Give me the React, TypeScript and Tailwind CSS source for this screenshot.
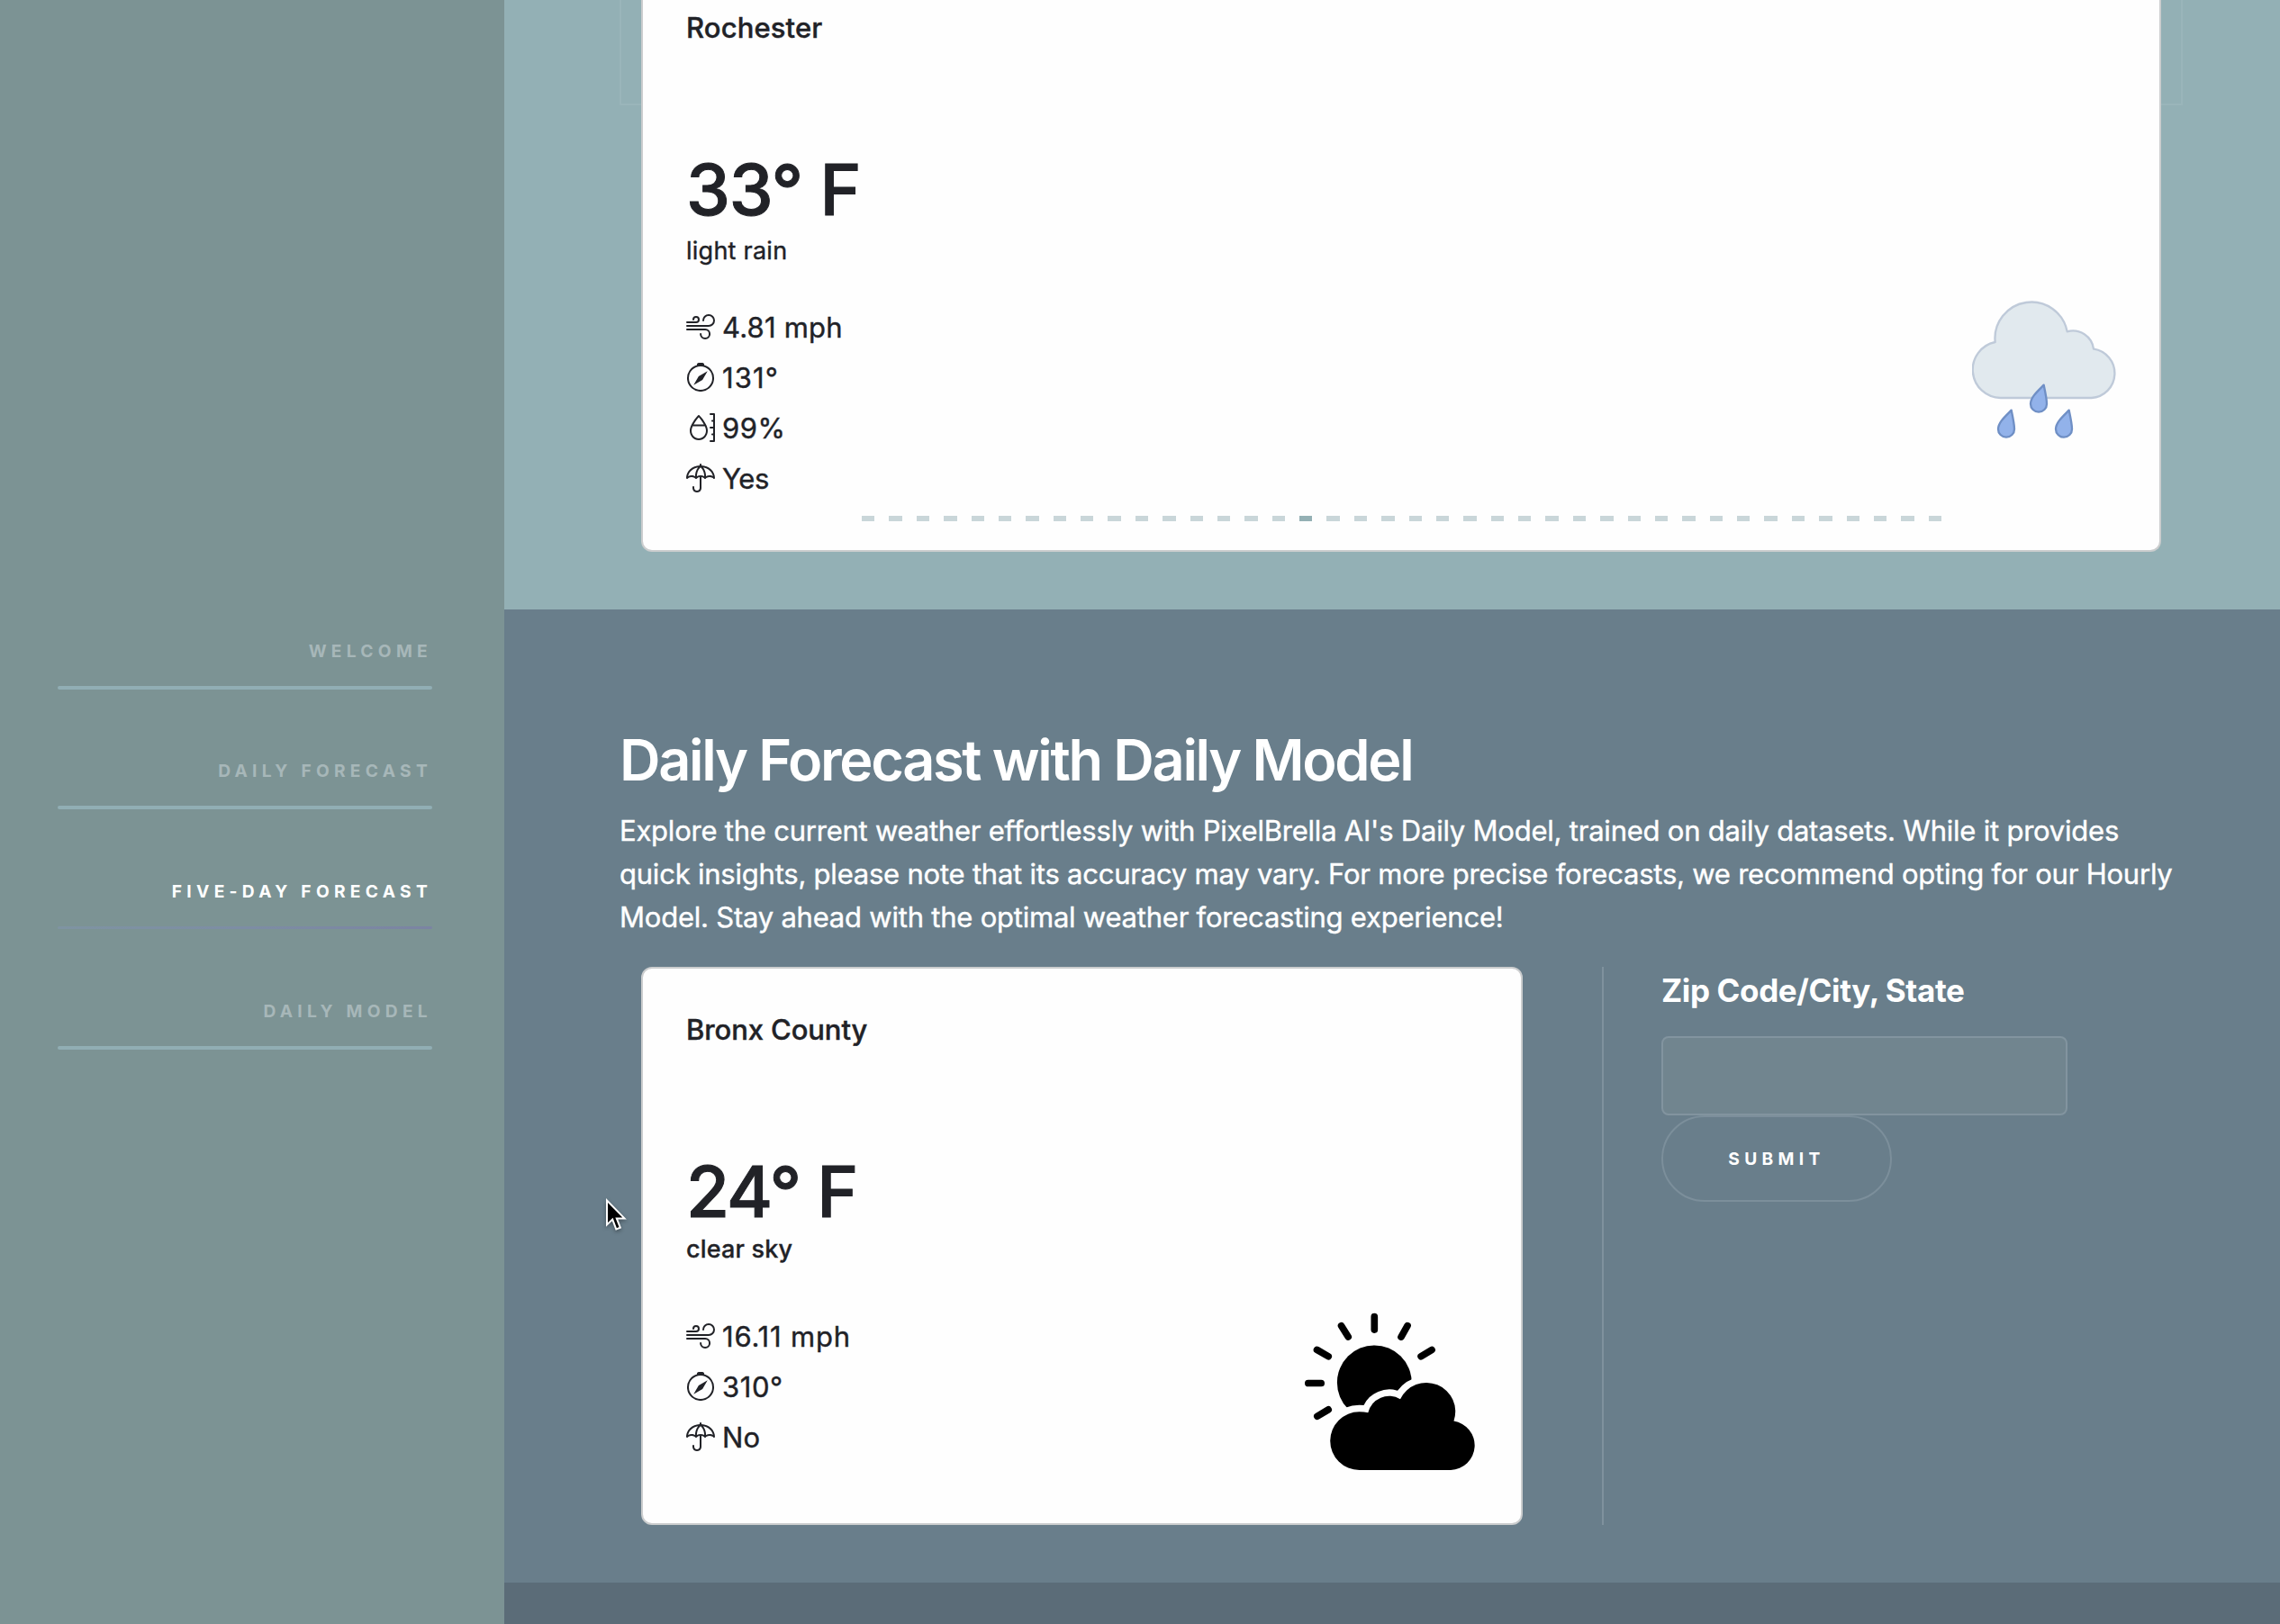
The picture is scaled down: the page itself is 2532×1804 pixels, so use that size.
import type { ReactNode } from "react";
import { BsCompass, BsMoisture, BsUmbrella, BsWind } from "react-icons/bs";

const navItems = [
  { label: "Welcome", active: false },
  { label: "Daily Forecast", active: false },
  { label: "Five-Day Forecast", active: true },
  { label: "Daily Model", active: false },
];

const ACTIVE_SLIDE = 16;
const slides = Array.from({ length: 40 }, (_, i) => i);

function Sidebar() {
  return (
    <aside className="w-[560px] shrink-0 bg-[#7c9394] pt-[706px] pr-20 pl-16">
      <nav className="flex flex-col gap-[73.33px]">
        {navItems.map((item) => (
          <a key={item.label} className="flex flex-col">
            <span
              className={`text-right text-[19.2px] leading-[34px] font-bold tracking-[5.28px] uppercase ${
                item.active ? "text-white" : "text-[#a7b7b9]"
              }`}
            >
              {item.label}
            </span>
            {item.active ? (
              <span className="mt-[22px] mb-px h-[3px] rounded-full bg-linear-to-r from-[#7f94a2] via-[#7d8da4] to-[#7b84a2]" />
            ) : (
              <span className="mt-[22px] h-1 rounded-full bg-[#91aeb4]" />
            )}
          </a>
        ))}
      </nav>
    </aside>
  );
}

function Metric({ icon, className, children }: { icon: ReactNode; className: string; children: ReactNode }) {
  return (
    <div className="flex h-14 items-center gap-2">
      <span className="text-[32px]">{icon}</span>
      <span className={`pt-0.5 text-[31px] leading-[54px] [-webkit-text-stroke:0.4px] ${className}`}>{children}</span>
    </div>
  );
}

function RainCloud() {
  return (
    <svg viewBox="210 100 480 465" className="h-[155px] w-40">
      <path
        d="M305 427A94 94 0 0 1 287 241A121.4 121.4 0 0 1 527 206A70 70 0 0 1 615 264A82 82 0 0 1 608 427Z"
        fill="#e1e9ee"
        stroke="#bfcad9"
        strokeWidth="7"
        strokeLinejoin="round"
      />
      {["translate(0 0)", "translate(-108 84)", "translate(84 84)"].map((t) => (
        <path
          key={t}
          transform={t}
          d="M449 384C455 412 459 430 459 447A27 27 0 0 1 405 447C405 426 425 408 449 384Z"
          fill="#92b2ea"
          stroke="#6f8fc5"
          strokeWidth="7"
          strokeLinejoin="round"
        />
      ))}
    </svg>
  );
}

function SunCloud() {
  const cloud =
    "M268 609A97 97 0 0 1 268 415Q284 415 297 418A72 72 0 0 1 404 373A96.35 96.35 0 0 1 582 446A82 82 0 0 1 572 609Z";
  return (
    <svg viewBox="87 85 568 527" className="h-[176px] w-[190px]">
      <g stroke="#000" strokeWidth="23" strokeLinecap="round">
        <path d="M318 99V142M208 129L231 166M428 129L407 166M127 209L165 231M509 209L473 231M98 320H141M128 430L165 408" />
      </g>
      <circle cx="318" cy="318" r="124" />
      <path d={cloud} fill="#fefefe" stroke="#fefefe" strokeWidth="44" />
      <path d={cloud} />
    </svg>
  );
}

function Cursor() {
  return (
    <svg
      viewBox="0 0 24 38"
      className="absolute top-[1329px] left-[672px] h-[38px] w-6 overflow-visible drop-shadow-[0_2px_2px_rgba(0,0,0,0.35)]"
    >
      <path
        d="M2 4.5V31.5L8.2 25.6L12.3 36.4L16.8 34.6L12.8 24.4H21.5Z"
        fill="#000"
        stroke="#fff"
        strokeWidth="2"
      />
    </svg>
  );
}

function CurrentSection() {
  return (
    <section className="relative h-[677px] bg-[#93b0b5] pl-[152px]">
      <div className="absolute top-0 left-32 h-[117px] w-[1736px] border-2 border-t-0 border-[#9ab5ba]" />
      <div className="relative h-[613px] w-[1688px] rounded-b-xl border-2 border-t-0 border-[#cbcdce] bg-[#fefefe] px-12 pt-3 text-[#212227]">
        <h5 className="text-[31px] leading-[38px] font-medium tracking-[0.12px] [-webkit-text-stroke:0.4px]">Rochester</h5>
        <div className="mt-[113px] text-[78px] leading-[95px] font-medium tracking-[-1.2px] [-webkit-text-stroke:1px]">33° F</div>
        <div className="text-[27px] leading-[42px] tracking-[0.25px] [-webkit-text-stroke:0.4px]">light rain</div>
        <div className="flex justify-between">
          <div className="mt-[35px]">
            <Metric icon={<BsWind />} className="tracking-[0.2px]">4.81 mph</Metric>
            <Metric icon={<BsCompass />} className="tracking-[1.1px]">131°</Metric>
            <Metric icon={<BsMoisture />} className="tracking-[0.5px]">99%</Metric>
            <Metric icon={<BsUmbrella />} className="tracking-[-0.4px]">Yes</Metric>
          </div>
          <div className="mt-[33px]">
            <RainCloud />
          </div>
        </div>
        <div className="absolute bottom-8 left-[243px] flex w-[1199px] gap-4">
          {slides.map((i) => (
            <span key={i} className={`h-1.5 flex-1 ${i === ACTIVE_SLIDE ? "bg-[#94b0b4]" : "bg-[#c9d6d9]"}`} />
          ))}
        </div>
      </div>
    </section>
  );
}

function DailyModelSection() {
  return (
    <section className="h-[1081px] bg-[#697e8b] pt-[129px] pl-32 text-white">
      <h2 className="text-[63px] leading-[76px] font-semibold tracking-[-2.32px]">
        Daily Forecast with Daily Model
      </h2>
      <p className="mt-[17px] text-[31px] leading-[48px] tracking-[-0.222px] whitespace-nowrap [-webkit-text-stroke:0.4px]">
        Explore the current weather effortlessly with PixelBrella AI's Daily Model, trained on daily datasets. While it
        provides
        <br />
        quick insights, please note that its accuracy may vary. For more precise forecasts, we recommend opting for our
        Hourly
        <br />
        Model. Stay ahead with the optimal weather forecasting experience!
      </p>
      <div className="mt-[31px] flex h-[620px] pl-6">
        <div className="w-[979px] rounded-xl border-2 border-[#cbcdce] bg-[#fefefe] px-12 pt-[49px] text-[#212227]">
          <h5 className="text-[31px] leading-[38px] font-medium tracking-[-0.1px] [-webkit-text-stroke:0.4px]">Bronx County</h5>
          <div className="mt-[113px] text-[78px] leading-[95px] font-medium tracking-[-1.8px] [-webkit-text-stroke:1px]">24° F</div>
          <div className="-mt-1 text-[27px] leading-[42px] font-medium tracking-[0.18px] [-webkit-text-stroke:0.3px]">clear sky</div>
          <div className="flex justify-between">
            <div className="mt-[47px]">
              <Metric icon={<BsWind />} className="tracking-[0.84px]">16.11 mph</Metric>
              <Metric icon={<BsCompass />} className="tracking-[0.6px]">310°</Metric>
              <Metric icon={<BsUmbrella />} className="tracking-[0.2px]">No</Metric>
            </div>
            <div className="mt-[49px] pr-[2px]">
              <SunCloud />
            </div>
          </div>
        </div>
        <div className="ml-[88px] border-l-2 border-[#7f919d] pl-16">
          <label className="mt-1 block text-[35px] leading-[44px] font-bold tracking-[-0.38px]">
            Zip Code/City, State
          </label>
          <input
            type="text"
            className="mt-[29px] block h-[88px] w-[451px] rounded-lg border-2 border-[#82949f] bg-[#71858f] outline-none"
          />
          <button className="flex h-24 w-64 items-center justify-center rounded-full border-2 border-[#7c8f9b] text-[19.2px] font-bold tracking-[5.35px] uppercase">
            Submit
          </button>
        </div>
      </div>
    </section>
  );
}

export default function App() {
  return (
    <div className="relative flex h-[1804px] w-[2532px] overflow-hidden bg-[#5b6c78] font-['Inter','Liberation_Sans',sans-serif]">
      <Sidebar />
      <main className="flex-1">
        <CurrentSection />
        <DailyModelSection />
      </main>
      <Cursor />
    </div>
  );
}
